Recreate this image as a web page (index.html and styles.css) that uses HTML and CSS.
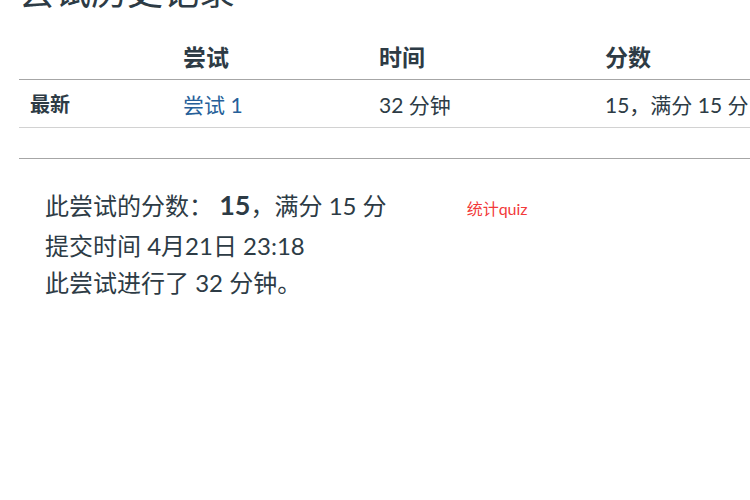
FILE: index.html
```html
<!DOCTYPE html>
<html lang="zh">
<head>
<meta charset="utf-8">
<link rel="stylesheet" href="styles.css">
</head>
<body>
<div class="page">
  <h2 class="title">尝试历史记录</h2>
  <table class="history">
    <colgroup>
      <col class="c1"><col class="c2"><col class="c3"><col class="c4">
    </colgroup>
    <thead>
      <tr><th></th><th>尝试</th><th>时间</th><th>分数</th></tr>
    </thead>
    <tbody>
      <tr><td class="latest">最新</td><td><a class="link" href="#">尝试 1</a></td><td>32 分钟</td><td>15，满分 15 分</td></tr>
    </tbody>
  </table>
  <div class="rule"></div>
  <div class="summary">
    <div class="line first"><span>此尝试的分数： <b class="score">15</b>，满分 15 分</span><span class="tag">统计quiz</span></div>
    <div class="line">提交时间 4月21日 23:18</div>
    <div class="line">此尝试进行了 32 分钟。</div>
  </div>
</div>
</body>
</html>
```

FILE: styles.css
```css
html, body { margin: 0; padding: 0; background: #fff; }
body {
  font-family: Lato, "Noto Sans CJK SC", sans-serif;
  color: #2d3b45;
  overflow: hidden;
  width: 750px;
  height: 500px;
}
.page { padding-left: 19px; }
.title {
  margin: -30px 0 0 0;
  font-size: 36px;
  font-weight: normal;
  line-height: 43px;
  white-space: nowrap;
}
.history {
  margin-top: 19px;
  border-collapse: collapse;
  table-layout: fixed;
  width: 900px;
}
.c1 { width: 153px; }
.c2 { width: 196px; }
.c3 { width: 226px; }
.c4 { width: 325px; }
.history th {
  text-align: left;
  font-size: 23px;
  font-weight: bold;
  height: 47px;
  padding: 0 11px;
  border-bottom: 1px solid #a6a6a6;
  white-space: nowrap;
}
.history td {
  font-size: 21px;
  height: 47px;
  padding: 0 11px;
  border-bottom: 1px solid #d2d2d2;
  white-space: nowrap;
}
.history td.latest { font-weight: bold; font-size: 20px; }
.link { color: #265f99; text-decoration: none; }
.rule {
  margin-top: 30px;
  border-top: 1px solid #a6a6a6;
}
.summary {
  padding: 27px 0 0 26px;
  font-size: 24px;
  line-height: 37px;
}
.line { white-space: nowrap; }
.first { display: flex; align-items: baseline; }
.score { font-size: 27px; }
.tag {
  margin-left: 80px;
  font-size: 16px;
  color: #f23a3a;
}
```
